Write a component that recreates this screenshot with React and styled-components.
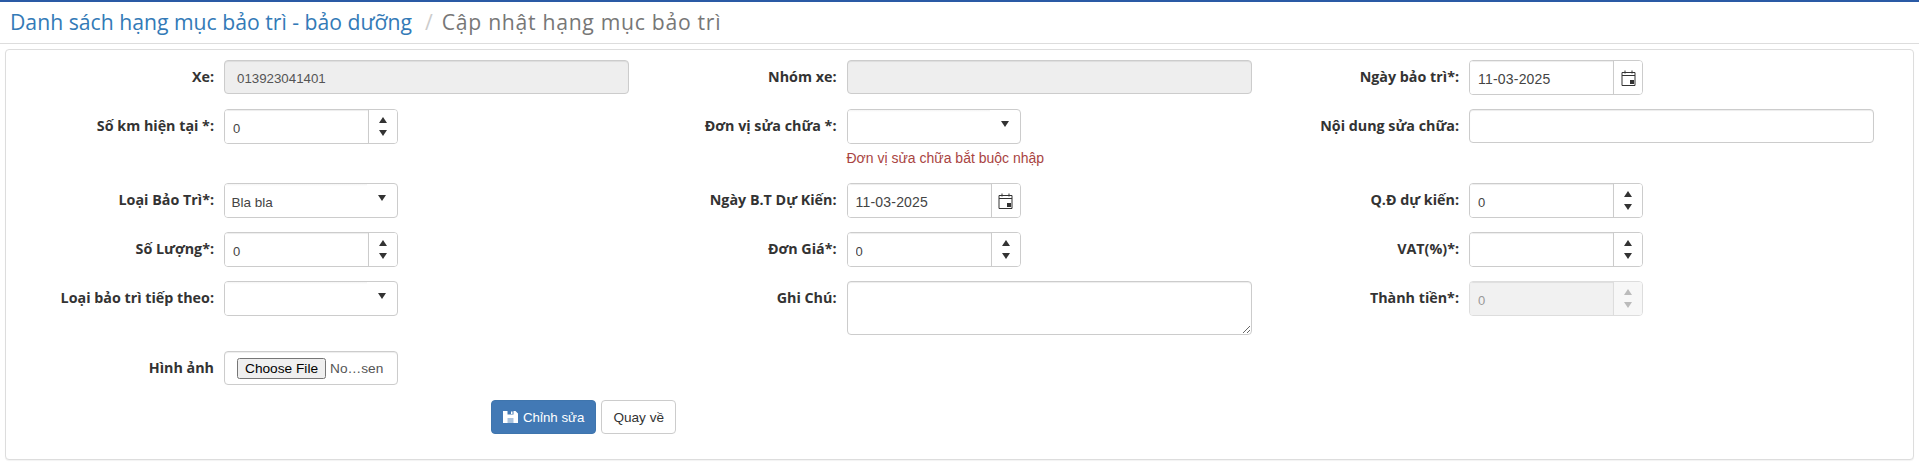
import React from 'react'
import styled, { createGlobalStyle } from 'styled-components'

const GlobalStyle = createGlobalStyle`
  * {
    box-sizing: border-box;
  }
  body {
    margin: 0;
    background: #fff;
    color: #333;
    font-family: 'Liberation Sans', Arial, sans-serif;
    font-size: 13px;
  }
`

const CalendarIcon = () => (
  <svg width='15' height='16' viewBox='0 0 15 16' fill='none'>
    <path d='M1 2.5h13v13H1z' stroke='#333' />
    <path d='M1 5.5h13' stroke='#333' />
    <path d='M4 0.5v3M11 0.5v3' stroke='#333' />
    <rect x='9' y='10' width='4' height='4' fill='#333' />
  </svg>
)

const SaveIcon = () => (
  <svg width='15' height='12' viewBox='0 0 15 12'>
    <path
      fill='#fff'
      fillRule='evenodd'
      d='M0 0h12.5L15 2.5V12H0zM4.5 0v3.5h6V0z'
    />
    <path fill='#fff' d='M8 0.5h1.5v2.5H8z' />
    <path fill='#4279b5' fillOpacity='0.45' d='M4.5 7h6v5h-6z' />
  </svg>
)

const SpinnerArrows = ({ disabled }) => (
  <Spinner>
    <ArrowUp $disabled={disabled} />
    <ArrowDown $disabled={disabled} />
  </Spinner>
)

const NumberField = ({ value, disabled }) => (
  <Group $disabled={disabled}>
    <GroupInput
      type='text'
      defaultValue={value}
      disabled={disabled}
      $disabled={disabled}
    />
    <Addon $disabled={disabled}>
      <SpinnerArrows disabled={disabled} />
    </Addon>
  </Group>
)

const DateField = ({ value }) => (
  <Group>
    <DateInput type='text' defaultValue={value} />
    <Addon>
      <CalendarIcon />
    </Addon>
  </Group>
)

const SelectField = ({ value }) => (
  <Group>
    <GroupSelect defaultValue={value}>
      <option value=''></option>
      <option value='Bla bla'>Bla bla</option>
    </GroupSelect>
    <SelectArrow />
  </Group>
)

const Field = ({ label, children }) => (
  <Cell>
    <Label>{label}</Label>
    <Control>{children}</Control>
  </Cell>
)

const App = () => {
  return (
    <Page>
      <GlobalStyle />
      <Header>
        <Crumb href='#'>Danh sách hạng mục bảo trì - bảo dưỡng</Crumb>
        <Slash>/</Slash>
        <CurrentCrumb>Cập nhật hạng mục bảo trì</CurrentCrumb>
      </Header>
      <Panel>
        <FormGrid>
          <Field label='Xe:'>
            <TextInput disabled defaultValue='013923041401' />
          </Field>
          <Field label='Nhóm xe:'>
            <TextInput disabled defaultValue='' />
          </Field>
          <Field label='Ngày bảo trì*:'>
            <DateField value='11-03-2025' />
          </Field>

          <Field label='Số km hiện tại *:'>
            <NumberField value='0' />
          </Field>
          <Field label='Đơn vị sửa chữa *:'>
            <SelectField value='' />
            <HelpText>Đơn vị sửa chữa bắt buộc nhập</HelpText>
          </Field>
          <Field label='Nội dung sửa chữa:'>
            <TextInput defaultValue='' />
          </Field>

          <Field label='Loại Bảo Trì*:'>
            <SelectField value='Bla bla' />
          </Field>
          <Field label='Ngày B.T Dự Kiến:'>
            <DateField value='11-03-2025' />
          </Field>
          <Field label='Q.Đ dự kiến:'>
            <NumberField value='0' />
          </Field>

          <Field label='Số Lượng*:'>
            <NumberField value='0' />
          </Field>
          <Field label='Đơn Giá*:'>
            <NumberField value='0' />
          </Field>
          <Field label='VAT(%)*:'>
            <NumberField value='' />
          </Field>

          <Field label='Loại bảo trì tiếp theo:'>
            <SelectField value='' />
          </Field>
          <Field label='Ghi Chú:'>
            <NoteArea />
          </Field>
          <Field label='Thành tiền*:'>
            <NumberField value='0' disabled />
          </Field>

          <Field label='Hình ảnh'>
            <FileBox>
              <input type='file' />
            </FileBox>
          </Field>
        </FormGrid>
        <Actions>
          <PrimaryButton type='button'>
            <SaveIcon />
            Chỉnh sửa
          </PrimaryButton>
          <DefaultButton type='button'>Quay về</DefaultButton>
        </Actions>
      </Panel>
    </Page>
  )
}

export default App

const Page = styled.div`
  width: 1919px;
  height: 462px;
  overflow: hidden;
  border-top: 2px solid #2a5aa5;
`

const Header = styled.div`
  display: flex;
  align-items: center;
  height: 42px;
  padding: 0 0 2px 10px;
  border-bottom: 1px solid #ddd;
  font-family: 'Open Sans', sans-serif;
  font-size: 21.2px;
`

const Crumb = styled.a`
  color: #337ab7;
  text-decoration: none;
`

const Slash = styled.span`
  margin: 0 9px 0 13px;
  color: #ccc;
`

const CurrentCrumb = styled.span`
  color: #777;
  letter-spacing: 0.7px;
`

const Panel = styled.div`
  margin: 5px 5px 0 5px;
  height: 411px;
  padding: 10px 0 0 19px;
  background: #fff;
  border: 1px solid #ddd;
  border-radius: 4px;
  box-shadow: 0 1px 1px rgba(0, 0, 0, 0.05);
`

const FormGrid = styled.div`
  display: grid;
  grid-template-columns: repeat(3, 622.5px);
  grid-template-rows: 35px 60px 35px 35px 56px 34px;
  row-gap: 14px;
`

const Cell = styled.div`
  display: grid;
  grid-template-columns: 189px 405px;
  column-gap: 10px;
  align-items: start;
`

const Label = styled.label`
  padding-top: 7px;
  color: #333;
  font-family: 'Open Sans', sans-serif;
  font-size: 14.3px;
  font-weight: bold;
  line-height: 20px;
  text-align: right;
  white-space: nowrap;
`

const Control = styled.div`
  min-width: 0;
`

const TextInput = styled.input`
  display: block;
  width: 100%;
  height: 34px;
  padding: 2px 12px 0;
  border: 1px solid #ccc;
  border-radius: 4px;
  background: #fff;
  color: #555;
  font: inherit;
  font-size: 13.3px;
  box-shadow: inset 0 1px 1px rgba(0, 0, 0, 0.075);
  &:disabled {
    background: #eee;
  }
`

const Group = styled.div`
  position: relative;
  display: flex;
  width: 174px;
  height: 35px;
  border: 1px solid ${p => (p.$disabled ? '#ddd' : '#ccc')};
  border-radius: 4px;
  background: #fff;
  overflow: hidden;
`

const GroupInput = styled.input`
  flex: 1;
  min-width: 0;
  padding: 3px 8px 0;
  border: 0;
  outline: 0;
  background: ${p => (p.$disabled ? '#f1f1f1' : '#fff')};
  color: ${p => (p.$disabled ? '#999' : '#444')};
  font: inherit;
  box-shadow: inset 0 1px 1px rgba(0, 0, 0, 0.075);
`

const DateInput = styled(GroupInput)`
  font-size: 14px;
  letter-spacing: 0.2px;
`

const GroupSelect = styled.select`
  width: 100%;
  padding: 3px 6.5px 0;
  border: 0;
  outline: 0;
  background: linear-gradient(#f4f4f4, #fff 2px) no-repeat left top / 142px 100%;
  color: #444;
  font: inherit;
  font-size: 13.5px;
  appearance: none;
`

const SelectArrow = styled.span`
  position: absolute;
  top: 11px;
  right: 11px;
  border-left: 4px solid transparent;
  border-right: 4px solid transparent;
  border-top: 6px solid #333;
  pointer-events: none;
`

const Addon = styled.div`
  display: flex;
  flex: 0 0 29px;
  align-items: center;
  justify-content: center;
  border-left: 1px solid ${p => (p.$disabled ? '#ddd' : '#ccc')};
  background: ${p => (p.$disabled ? '#f7f7f7' : '#fff')};
`

const Spinner = styled.div`
  display: flex;
  flex-direction: column;
  align-items: center;
  gap: 7px;
`

const ArrowUp = styled.span`
  border-left: 4px solid transparent;
  border-right: 4px solid transparent;
  border-bottom: 6px solid ${p => (p.$disabled ? '#bbb' : '#333')};
`

const ArrowDown = styled.span`
  border-left: 4px solid transparent;
  border-right: 4px solid transparent;
  border-top: 6px solid ${p => (p.$disabled ? '#bbb' : '#333')};
`

const HelpText = styled.div`
  margin-top: 5px;
  color: #a94442;
  font-size: 14px;
  line-height: 18px;
`

const NoteArea = styled.textarea`
  display: block;
  width: 100%;
  height: 54px;
  padding: 6px 12px;
  border: 1px solid #ccc;
  border-radius: 4px;
  color: #555;
  font: inherit;
  resize: both;
  box-shadow: inset 0 1px 1px rgba(0, 0, 0, 0.075);
`

const FileBox = styled.div`
  width: 174px;
  height: 34px;
  padding: 6px 12px;
  border: 1px solid #ccc;
  border-radius: 4px;
  color: #555;
  box-shadow: inset 0 1px 1px rgba(0, 0, 0, 0.075);
  input {
    display: block;
    width: 100%;
    font-family: 'Liberation Sans', Arial, sans-serif;
    font-size: 13.7px;
  }
`

const Actions = styled.div`
  display: flex;
  gap: 5px;
  margin-top: 15px;
  padding-left: 466px;
`

const PrimaryButton = styled.button`
  display: flex;
  align-items: center;
  gap: 5px;
  height: 34px;
  padding: 0 11px 0 11px;
  border: 1px solid #3f75ad;
  border-radius: 4px;
  background: #4279b5;
  color: #fff;
  font: inherit;
  font-size: 13.3px;
`

const DefaultButton = styled.button`
  height: 34px;
  padding: 0 11px;
  border: 1px solid #ccc;
  border-radius: 4px;
  background: #fff;
  color: #333;
  font: inherit;
  font-size: 13.6px;
`
